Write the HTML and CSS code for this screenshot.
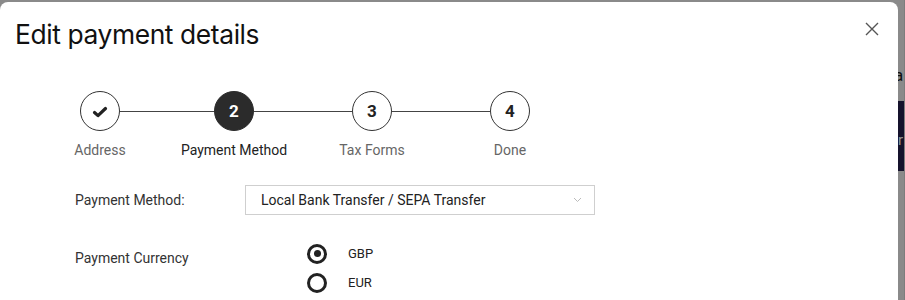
FILE: index.html
```html
<!DOCTYPE html>
<html lang="en">
  <head>
    <meta charset="UTF-8" />
    <meta name="viewport" content="width=device-width, initial-scale=1.0" />
    <title>Edit payment details</title>
    <link rel="stylesheet" href="styles.css">
  </head>
  <body>
    <div class="backdrop">
      <div class="modal">
        <div class="modal-head">
          <h1 class="modal-title">Edit payment details</h1>
          <button class="close-btn" type="button" aria-label="Close">
            <svg width="14" height="14" viewBox="0 0 14 14">
              <path d="M1 1 L13 13 M13 1 L1 13" stroke="#555" stroke-width="1.4" fill="none" />
            </svg>
          </button>
        </div>

        <div class="stepper">
          <div class="step-track">
            <span class="step-dot done">
              <svg width="16" height="12" viewBox="0 0 16 12">
                <path d="M2.5 6.5 L6 9.6 L13.5 2.5" stroke="#222" stroke-width="3.2" fill="none" stroke-linecap="round" stroke-linejoin="round" />
              </svg>
            </span>
            <span class="step-line first"></span>
            <span class="step-dot active">2</span>
            <span class="step-line"></span>
            <span class="step-dot">3</span>
            <span class="step-line"></span>
            <span class="step-dot">4</span>
          </div>
          <div class="step-labels">
            <span>Address</span>
            <span class="current">Payment Method</span>
            <span>Tax Forms</span>
            <span>Done</span>
          </div>
        </div>

        <form class="payment-form">
          <div class="form-row">
            <label class="form-label">Payment Method:</label>
            <div class="select-box">
              <span>Local Bank Transfer / SEPA Transfer</span>
              <svg width="9" height="6" viewBox="0 0 9 6">
                <path d="M1 1 L4.5 4.5 L8 1" stroke="#bbb" stroke-width="1" fill="none" />
              </svg>
            </div>
          </div>
          <div class="form-row currency-row">
            <span class="form-label">Payment Currency</span>
            <div class="radio-group">
              <label class="radio-option"><span class="radio checked"></span>GBP</label>
              <label class="radio-option"><span class="radio"></span>EUR</label>
            </div>
          </div>
        </form>
      </div>

      <!-- bit of the page behind the overlay -->
      <div class="peek">
        <div class="peek-text">a</div>
        <div class="peek-bar">r</div>
      </div>
    </div>
  </body>
</html>
```

FILE: styles.css
```css
body {
  margin: 0;
  background-color: #8a8a8a;
  font-family: Roboto, "Liberation Sans", sans-serif;
  overflow: hidden;
}

.backdrop {
  display: flex;
  height: 300px;
}

.modal {
  width: 898px;
  height: 298px;
  margin-top: 2px;
  background-color: #fff;
  border-radius: 8px 8px 0 0;
  overflow: hidden;
  flex: none;
}

.modal-head {
  display: flex;
  justify-content: space-between;
  align-items: flex-start;
  padding: 14px 19px 0 15px;
}
.modal-title {
  margin: 0;
  font-family: Inter, "Liberation Sans", sans-serif;
  font-size: 26.4px;
  font-weight: 400;
  line-height: 36px;
  letter-spacing: -0.4px;
  color: #111;
}
.close-btn {
  margin-top: 6px;
  padding: 0;
  border: none;
  background: none;
  line-height: 0;
}

/* stepper */
.stepper {
  margin-top: 39px;
}
.step-track {
  display: flex;
  align-items: center;
  padding-left: 80px;
}
.step-dot {
  box-sizing: border-box;
  width: 40px;
  height: 40px;
  border: 1px solid #333;
  border-radius: 50%;
  display: flex;
  align-items: center;
  justify-content: center;
  font-size: 17px;
  font-weight: 700;
  color: #222;
  flex: none;
}
.step-dot.active {
  background-color: #2b2b2b;
  border-color: #2b2b2b;
  color: #fff;
}
.step-dot.done svg {
  margin-top: 2px;
}
.step-line {
  height: 1px;
  width: 98px;
  background-color: #444;
}
.step-line.first {
  width: 94px;
}
.step-labels {
  display: grid;
  grid-template-columns: 134px 134px 142px 134px;
  padding-left: 33px;
  margin-top: 9px;
  font-size: 14px;
  line-height: 20px;
  color: #666;
  text-align: center;
}
.step-labels .current {
  color: #222;
}

/* form */
.payment-form {
  padding-left: 75px;
  margin-top: 25px;
  font-size: 14px;
  color: #333;
}
.form-row {
  display: flex;
  align-items: center;
}
.form-label {
  width: 170px;
  line-height: 20px;
  flex: none;
}
.select-box {
  box-sizing: border-box;
  width: 350px;
  height: 30px;
  border: 1px solid #cfcfcf;
  padding: 0 12px 0 15px;
  display: flex;
  align-items: center;
  justify-content: space-between;
  color: #222;
}

.currency-row {
  align-items: flex-start;
  margin-top: 24px;
}
.currency-row .form-label {
  width: 232px;
  margin-top: 9px;
}
.radio-option {
  display: flex;
  align-items: center;
  height: 29px;
  font-size: 13px;
  color: #222;
}
.radio {
  box-sizing: border-box;
  width: 20px;
  height: 20px;
  border: 3px solid #222;
  border-radius: 50%;
  margin-right: 21px;
  display: flex;
  align-items: center;
  justify-content: center;
}
.radio.checked::after {
  content: "";
  width: 7px;
  height: 7px;
  border-radius: 50%;
  background-color: #222;
}

/* page behind */
.peek {
  width: 6px;
  border-right: 1px solid #7d7d7d;
  overflow: hidden;
  padding-top: 65px;
  flex: none;
}
.peek-text {
  margin-left: -4px;
  font-size: 17px;
  line-height: 20px;
  color: #111;
}
.peek-bar {
  margin-top: 16px;
  height: 70px;
  background-color: #15122c;
  color: #9a9a9a;
  font-size: 15px;
  line-height: 20px;
  padding-top: 29px;
  box-sizing: border-box;
}
```
